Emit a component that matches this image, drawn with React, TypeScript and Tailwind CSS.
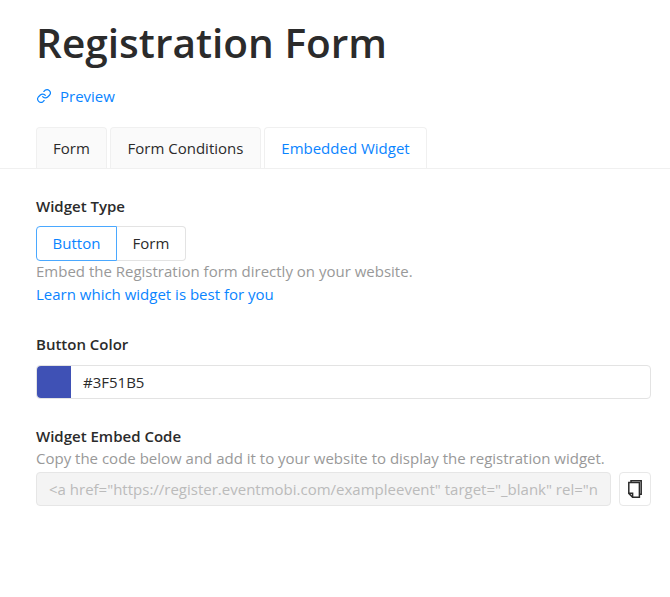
const font = { fontFamily: '"Open Sans", sans-serif' };

function CopyIcon() {
  return (
    <svg width="14" height="18" viewBox="0 0 14 18" fill="none" stroke="#2b2b2b" strokeWidth="1.5">
      <path d="M3 2V0.8h10.2v13.4H12" />
      <path d="M0.8 2.6h10.6v14.6H4.6L0.8 13.4z" />
      <path d="M0.8 13.2h3.8v4" />
    </svg>
  );
}

function LinkIcon() {
  return (
    <svg width="16" height="16" viewBox="0 0 24 24" fill="none" stroke="#0a84ff" strokeWidth="1.8" strokeLinecap="round" strokeLinejoin="round">
      <path d="M10 13a5 5 0 0 0 7.5.5l3-3a5 5 0 0 0-7-7l-1.7 1.7" />
      <path d="M14 11a5 5 0 0 0-7.5-.5l-3 3a5 5 0 0 0 7 7l1.7-1.7" />
    </svg>
  );
}

export default function App() {
  return (
    <div className="min-h-[597px] bg-white text-[#2b2b2b] text-[15px] leading-6" style={font}>
      <div className="px-9">
        <h1 className="pt-[16px] text-[40.6px] font-semibold leading-[54px]">Registration Form</h1>
        <a className="mt-[14px] flex items-center gap-[8px] text-[#0a84ff]">
          <LinkIcon />
          <span>Preview</span>
        </a>
        <div className="mt-[19px] flex gap-[3px] h-[41px]">
          <div className="flex w-[71px] items-center justify-center rounded-t border border-b-0 border-[#f0f0f0] bg-[#fafafa] pb-px">Form</div>
          <div className="flex w-[151px] items-center justify-center rounded-t border border-b-0 border-[#f0f0f0] bg-[#fafafa] pb-px">Form Conditions</div>
          <div className="flex w-[163px] items-center justify-center rounded-t border border-b-0 border-[#f0f0f0] bg-white pb-px text-[#0a84ff]">Embedded Widget</div>
        </div>
      </div>
      <div className="border-t border-[#f0f0f0] px-9 pt-[25px]">
        <div className="font-semibold">Widget Type</div>
        <div className="mt-[8px] flex h-[35px] w-[150px]">
          <div className="flex w-[81px] items-center justify-center rounded-l border border-[#4aa8ff] pb-[2px] text-[#0a84ff]">Button</div>
          <div className="flex flex-1 items-center justify-center rounded-r border border-l-0 border-[#e3e3e3] pb-[2px]">Form</div>
        </div>
        <p className="-mt-[2px] text-[#999999]">Embed the Registration form directly on your website.</p>
        <a className="-mt-px block text-[#0a84ff]">Learn which widget is best for you</a>
        <div className="mt-[26px] font-semibold">Button Color</div>
        <div className="mt-[9px] flex h-[34px] w-[615px] rounded border border-[#e3e3e3]">
          <div className="w-[34px] rounded-l bg-[#3f51b5]" />
          <div className="flex items-center pb-px pl-[12px]">#3F51B5</div>
        </div>
        <div className="mt-[25px] font-semibold">Widget Embed Code</div>
        <p className="-mt-[2px] text-[#999999]">Copy the code below and add it to your website to display the registration widget.</p>
        <div className="mt-[2px] flex items-center gap-[8px] w-[615px]">
          <div className="flex h-[34px] w-[575px] items-center rounded border border-[#e6e6e6] bg-[#f4f4f4] px-[12px] pb-px text-[#bbbbbb]">
            <span className="block overflow-hidden whitespace-nowrap">{'<a href="https://register.eventmobi.com/exampleevent" target="_blank" rel="noopener">'}</span>
          </div>
          <div className="flex h-[34px] w-[32px] items-center justify-center rounded border border-[#e8e8e8]">
            <CopyIcon />
          </div>
        </div>
      </div>
    </div>
  );
}
